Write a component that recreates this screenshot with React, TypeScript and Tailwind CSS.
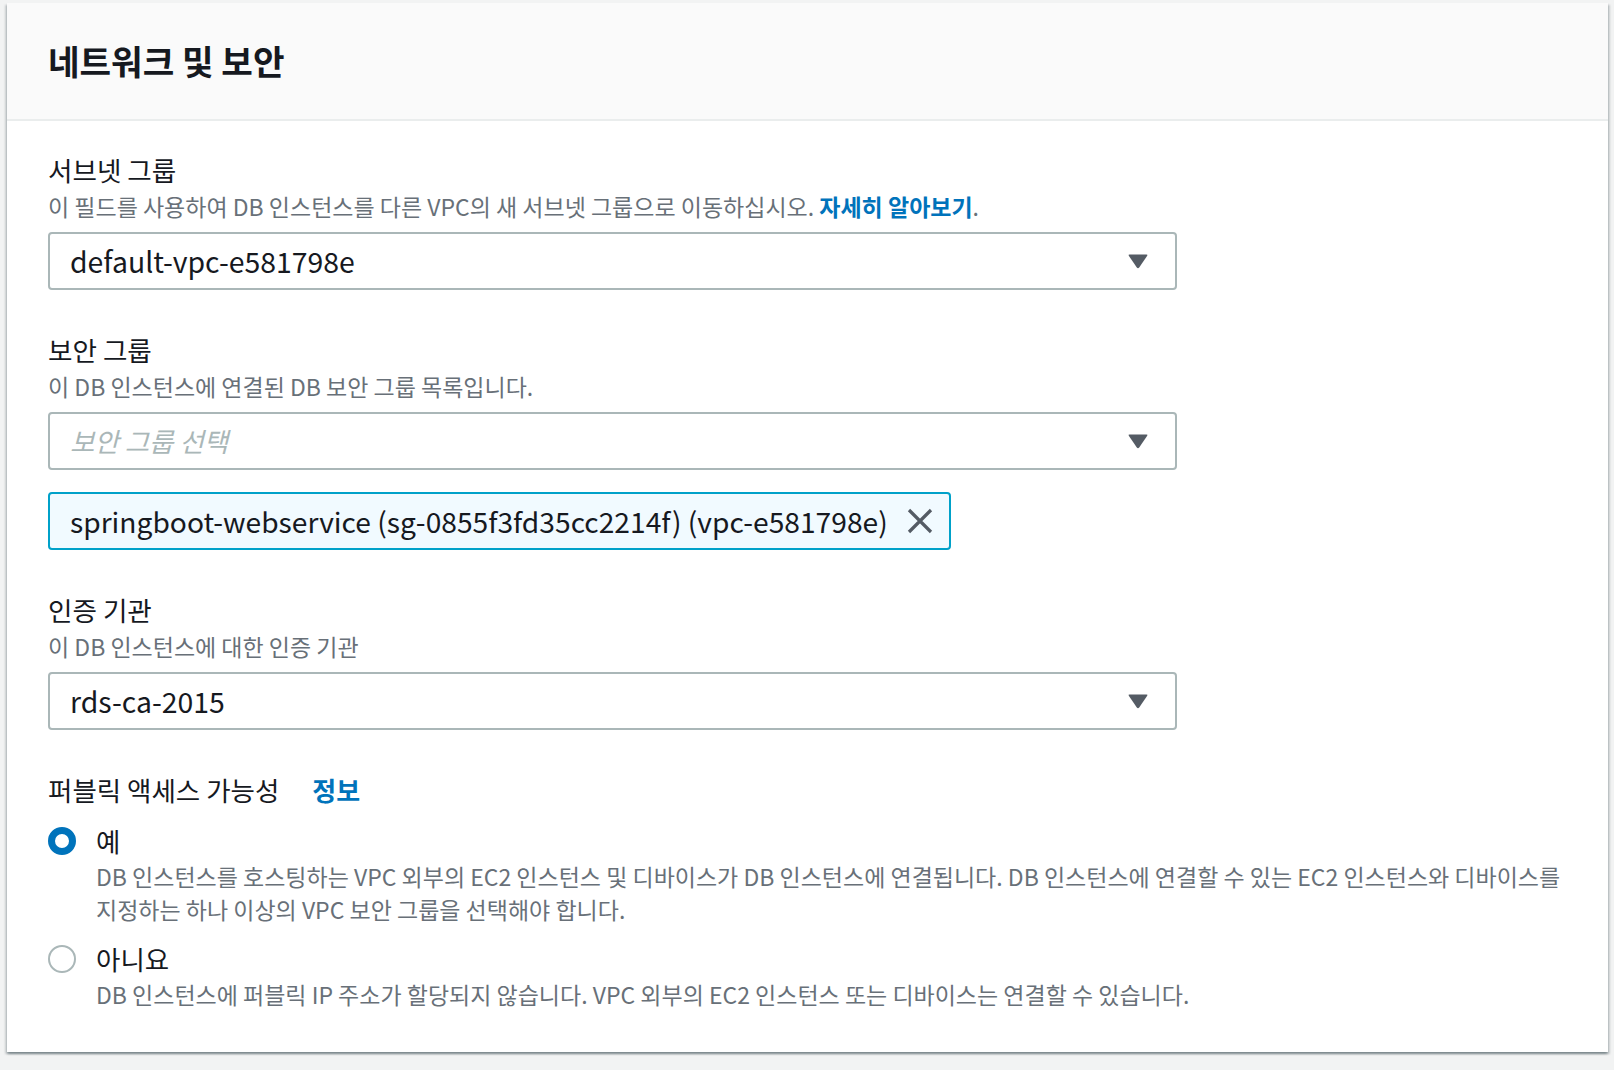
import React from "react";

function Arrow() {
  return (
    <svg width="22" height="16" viewBox="0 0 22 16" className="shrink-0">
      <path d="M2.5 1.5 H19.5 Q21 1.5 20.2 2.8 L12.2 14.6 Q11 16 9.8 14.6 L1.8 2.8 Q1 1.5 2.5 1.5 Z" fill="#545b64" />
    </svg>
  );
}

function Select({ children, placeholder }: { children: React.ReactNode; placeholder?: boolean }) {
  return (
    <div className="flex h-[58px] w-[1129px] items-center justify-between rounded-[4px] border-2 border-[#aab7b8] bg-white pl-[20px] pr-[26px]">
      <span
        className={
          placeholder
            ? "text-[26.5px] italic text-[#aab7b8]"
            : "text-[28.4px] text-[#16191f]"
        }
      >
        {children}
      </span>
      <Arrow />
    </div>
  );
}

function Field({
  label,
  desc,
  children,
}: {
  label: React.ReactNode;
  desc: React.ReactNode;
  children: React.ReactNode;
}) {
  return (
    <div className="flex flex-col">
      <div className="h-[36px] text-[26.6px] leading-[36px] text-[#16191f]">{label}</div>
      <div className="h-[36px] text-[23px] leading-[36px] text-[#687078]">{desc}</div>
      <div className="mt-[8px] flex flex-col gap-[22px]">{children}</div>
    </div>
  );
}

function Radio({ checked }: { checked: boolean }) {
  return checked ? (
    <span className="box-border h-[28px] w-[28px] shrink-0 rounded-full border-[7px] border-[#0073bb] bg-white" />
  ) : (
    <span className="box-border h-[28px] w-[28px] shrink-0 rounded-full border-2 border-[#aab7b8] bg-white" />
  );
}

export default function App() {
  return (
    <div className="min-h-[1070px] bg-[#f2f3f3] px-[6px] pt-[3px] font-['Noto_Sans_CJK_KR',sans-serif] text-[#16191f]">
      <div className="ml-[1px] h-[1049px] bg-white shadow-[0_2px_2px_0_rgba(0,28,36,0.3),2px_2px_2px_0_rgba(0,28,36,0.15),-2px_2px_2px_0_rgba(0,28,36,0.15)]">
        <div className="flex h-[118px] items-center border-b-2 border-[#eaeded] bg-[#fafafa] pl-[41px]">
          <h2 className="text-[34.3px] font-bold text-[#16191f]">네트워크 및 보안</h2>
        </div>
        <div className="flex flex-col gap-[42px] pl-[41px] pt-[31px]">
          <Field
            label="서브넷 그룹"
            desc={
              <>
                이 필드를 사용하여 DB 인스턴스를 다른 VPC의 새 서브넷 그룹으로 이동하십시오.{" "}
                <span className="font-bold text-[#0073bb]">자세히 알아보기</span>.
              </>
            }
          >
            <Select>default-vpc-e581798e</Select>
          </Field>

          <Field label="보안 그룹" desc="이 DB 인스턴스에 연결된 DB 보안 그룹 목록입니다.">
            <Select placeholder>보안 그룹 선택</Select>
            <div className="flex h-[58px] w-[903px] items-center justify-between rounded-[4px] border-2 border-[#00a1c9] bg-[#f1faff] pl-[20px] pr-[15px]">
              <span className="text-[28.2px] text-[#16191f]">
                springboot-webservice (sg-0855f3fd35cc2214f) (vpc-e581798e)
              </span>
              <svg width="28" height="28" viewBox="0 0 28 28" className="shrink-0">
                <path d="M3 3 L25 25 M25 3 L3 25" stroke="#545b64" strokeWidth="3.2" strokeLinecap="butt" />
              </svg>
            </div>
          </Field>

          <Field label="인증 기관" desc="이 DB 인스턴스에 대한 인증 기관">
            <Select>rds-ca-2015</Select>
          </Field>

          <div className="flex flex-col pb-[41px]">
            <div className="flex h-[36px] items-center gap-[33px] leading-[36px]">
              <span className="text-[26.5px] text-[#16191f]">퍼블릭 액세스 가능성</span>
              <span className="text-[26px] font-bold text-[#0073bb]">정보</span>
            </div>
            <div className="mt-[15px] flex flex-col">
              <div className="flex h-[36px] items-center gap-[20px]">
                <Radio checked />
                <span className="text-[26.5px] leading-[36px] text-[#16191f]">예</span>
              </div>
              <div className="pl-[48px] pt-[1px] text-[23px] leading-[33px] text-[#687078]">
                DB 인스턴스를 호스팅하는 VPC 외부의 EC2 인스턴스 및 디바이스가 DB 인스턴스에 연결됩니다. DB 인스턴스에 연결할 수 있는 EC2 인스턴스와 디바이스를
                <br />
                지정하는 하나 이상의 VPC 보안 그룹을 선택해야 합니다.
              </div>
              <div className="mt-[15px] flex h-[36px] items-center gap-[20px]">
                <Radio checked={false} />
                <span className="text-[26.5px] leading-[36px] text-[#16191f]">아니요</span>
              </div>
              <div className="pl-[48px] pt-[1px] text-[23px] leading-[33px] text-[#687078]">
                DB 인스턴스에 퍼블릭 IP 주소가 할당되지 않습니다. VPC 외부의 EC2 인스턴스 또는 디바이스는 연결할 수 있습니다.
              </div>
            </div>
          </div>
        </div>
      </div>
    </div>
  );
}
